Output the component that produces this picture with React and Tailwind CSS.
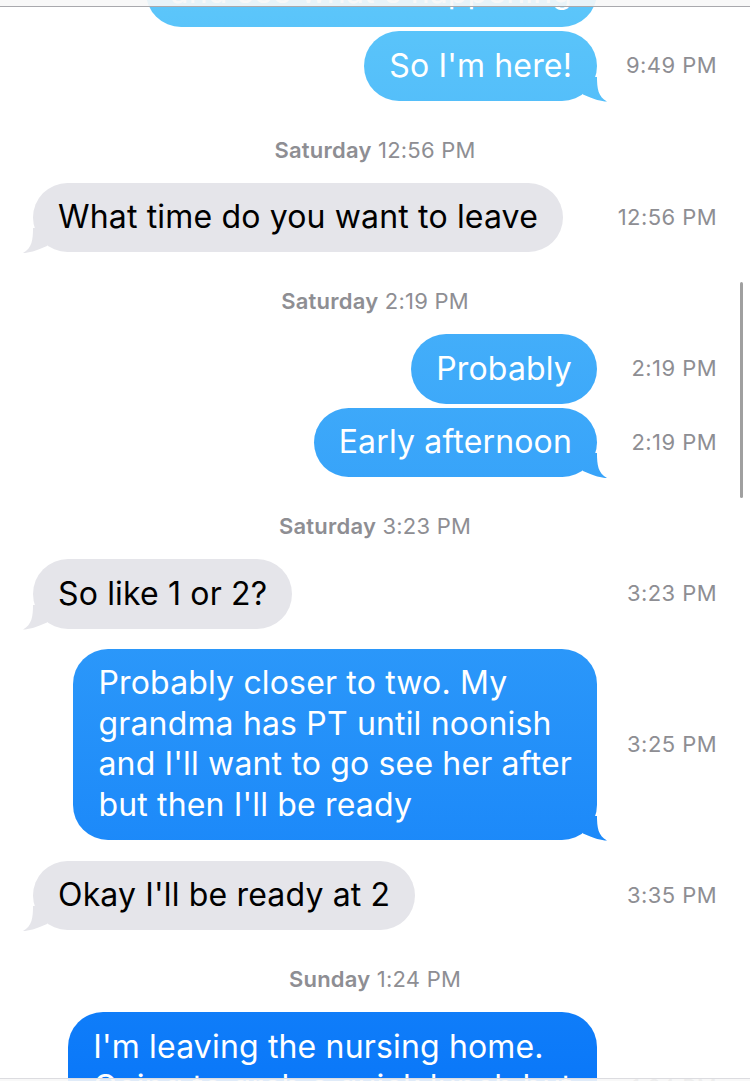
import React from 'react';

// bubbles share one gradient that is fixed to the screen, like iMessage
const blue = 'bg-fixed bg-linear-to-b/srgb from-[#5cc6fa] to-[#0a78f9]';

const Tail = ({ out }) => (
    <div
        className={`absolute bottom-[-1px] w-[26px] h-[25px] [clip-path:path('M14_0C14_12,15_20,24_25C18_25,12_23,0_18L0_0Z')] ${
            out ? `right-[-12px] ${blue}` : 'left-[-12px] -scale-x-100 bg-[#e5e5ea]'
        }`}
    />
);

const Bubble = ({ out, lines, tail }) => (
    <div
        className={`relative rounded-[35px] px-[25px] py-[14.5px] text-[32px] leading-[40.5px] tracking-[0.005em] whitespace-nowrap ${
            out ? `${blue} text-white` : 'bg-[#e5e5ea] text-black'
        }`}
    >
        {lines.map((line, i) => (
            <div key={i}>{line}</div>
        ))}
        {tail && <Tail out={out} />}
    </div>
);

const Row = ({ out, lines, time, tail = true, className = '' }) => (
    <div className={`flex items-center ${className}`}>
        <div className={`flex-1 flex pl-[33px] ${out ? 'justify-end' : 'justify-start'}`}>
            <Bubble out={out} lines={lines} tail={tail} />
        </div>
        <div className="w-[153px] pr-[33px] text-right text-[22px] tracking-[0.02em] text-[#8e8e93]">{time}</div>
    </div>
);

const Stamp = ({ day, time }) => (
    <div className="mt-[37px] mb-[21px] text-center text-[22px] leading-6 tracking-[0.01em] text-[#8e8e93]">
        <span className="font-semibold">{day}</span> {time}
    </div>
);

const App = () => {
    return (
        <div className="relative w-[750px] h-[1081px] overflow-hidden bg-white [font-family:Inter,Roboto,sans-serif]">
            <div className="flex flex-col -mt-[83px]">
                <Row out lines={['I came early to help out', "and see what's happening"]} tail={false} />
                <Row out lines={["So I'm here!"]} time="9:49 PM" className="mt-1" />

                <Stamp day="Saturday" time="12:56 PM" />
                <Row lines={['What time do you want to leave']} time="12:56 PM" />

                <Stamp day="Saturday" time="2:19 PM" />
                <Row out lines={['Probably']} time="2:19 PM" tail={false} />
                <Row out lines={['Early afternoon']} time="2:19 PM" className="mt-1" />

                <Stamp day="Saturday" time="3:23 PM" />
                <Row lines={['So like 1 or 2?']} time="3:23 PM" />
                <Row
                    out
                    lines={[
                        'Probably closer to two. My',
                        'grandma has PT until noonish',
                        "and I'll want to go see her after",
                        "but then I'll be ready",
                    ]}
                    time="3:25 PM"
                    className="mt-5"
                />
                <Row lines={["Okay I'll be ready at 2"]} time="3:35 PM" className="mt-[21px]" />

                <Stamp day="Sunday" time="1:24 PM" />
                <Row
                    out
                    lines={["I'm leaving the nursing home.", 'Going to grab a quick lunch but', 'then I can head over']}
                    time="1:24 PM"
                />
            </div>

            {/* nav bar edge, input bar edge and scroll indicator */}
            <div className="absolute inset-x-0 top-0 h-[7px] bg-[#f7f7f7]/90 border-b border-[#a9a9ad]" />
            <div className="absolute inset-x-0 bottom-0 h-[3px] bg-[#f7f7f7]/90 border-t border-[#dcdce0]" />
            <div className="absolute right-[7px] top-[282px] w-[3.5px] h-[216px] rounded-full bg-[#a0a0a0]" />
        </div>
    );
};

export default App;
